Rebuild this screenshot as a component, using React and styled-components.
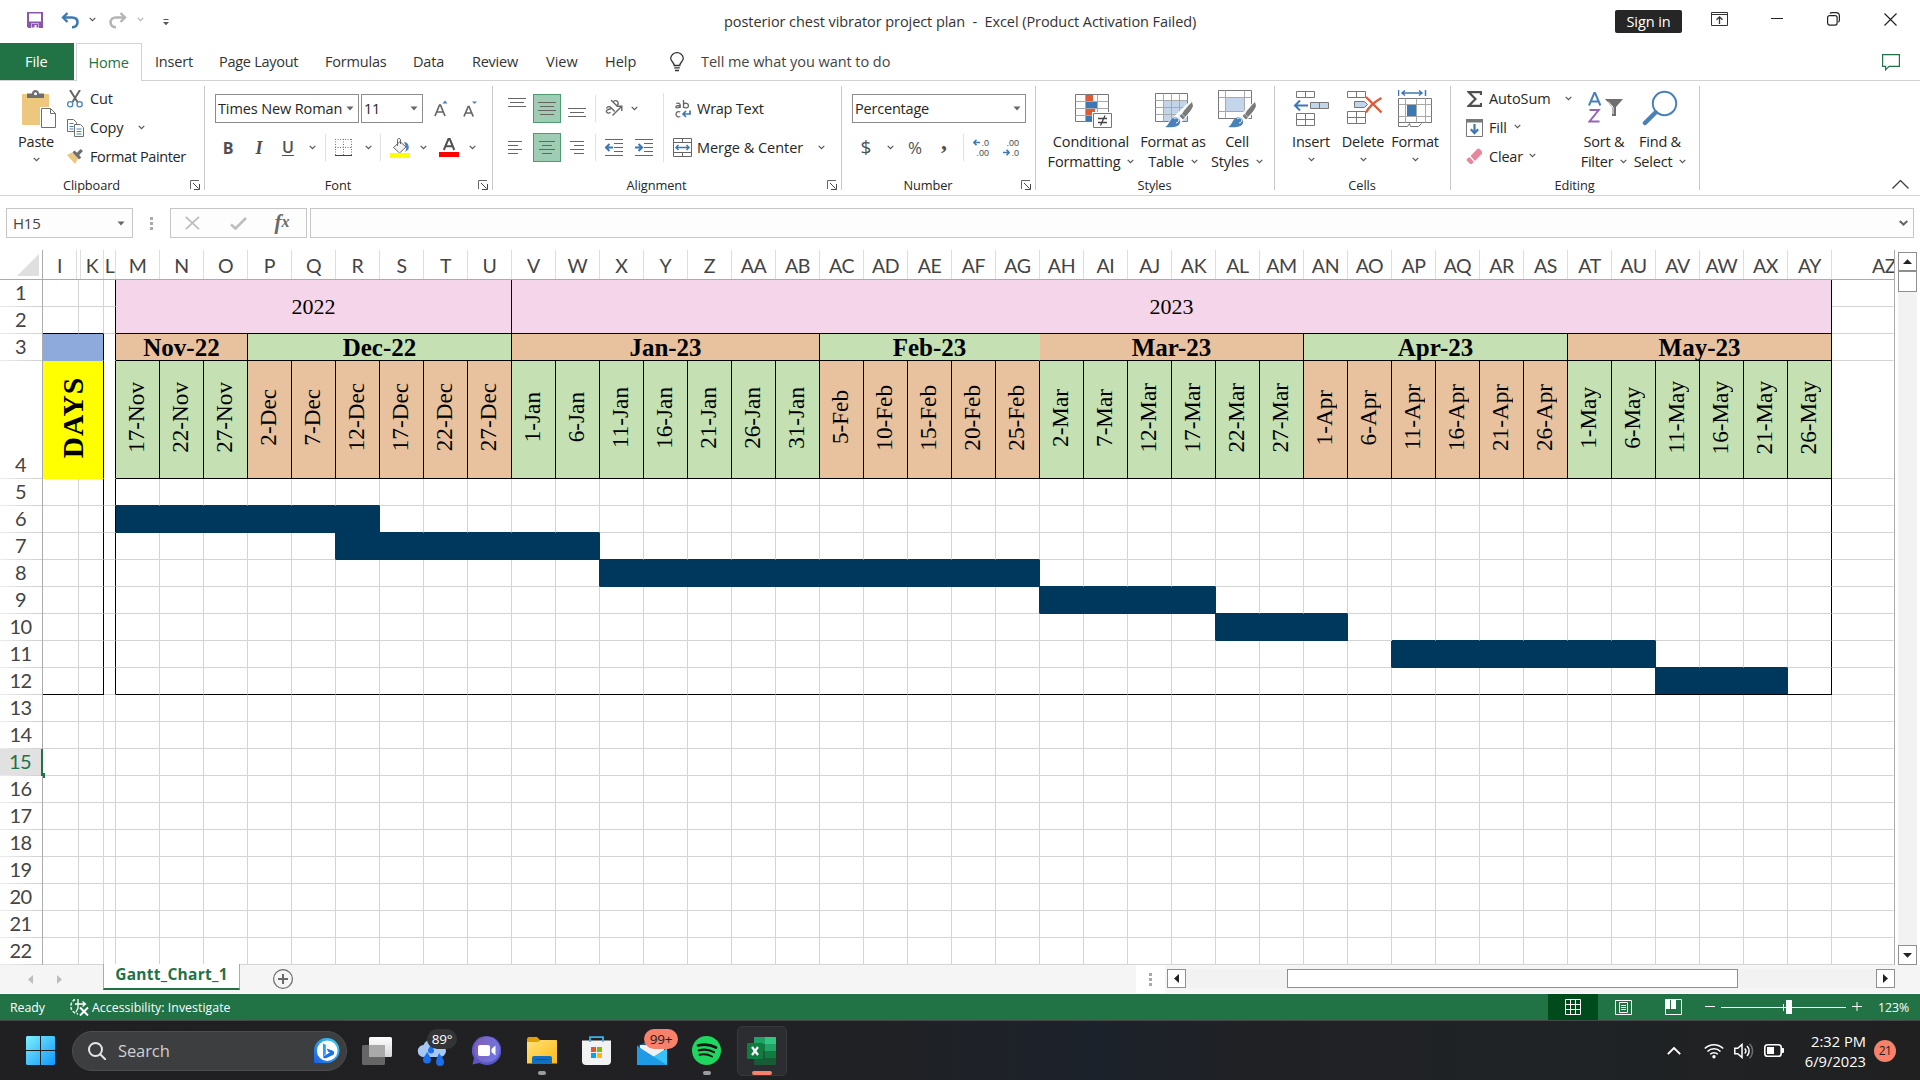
import React from "react";
import styled, { createGlobalStyle } from "styled-components";

const UI = '"Open Sans", "Noto Sans", sans-serif';
const SERIF = '"Liberation Serif", serif';
const GRIDLINE = "#d4d4d4";
const NAVY = "#00375c";
const ORANGE = "#e8c19f";
const GREEN = "#c5e0b3";
const PINK = "#f5d5ea";

const Global = createGlobalStyle`
  * { box-sizing: border-box; }
  html, body { margin: 0; padding: 0; background: #fff; }
  body { width: 1920px; height: 1080px; overflow: hidden; font-family: ${UI}; color: #262626; }
  svg { display: block; flex: none; }
`;

const Window = styled.div`
  width: 1920px;
  height: 1080px;
  display: flex;
  flex-direction: column;
  overflow: hidden;
  font-size: 14.5px;
`;

/* ---------- shared pieces ---------- */

const Slot = styled.div`
  flex: none;
  display: flex;
  align-items: center;
  justify-content: ${(p) => p.$j || "center"};
  width: ${(p) => p.$w}px;
  margin-left: ${(p) => p.$ml || 0}px;
  margin-top: ${(p) => p.$mt || 0}px;
`;

const Text = styled.span`
  flex: none;
  white-space: pre;
  width: ${(p) => (p.$w ? p.$w + "px" : "auto")};
  margin-left: ${(p) => p.$ml || 0}px;
  font-size: ${(p) => p.$fs || 14.5}px;
  letter-spacing: ${(p) => (p.$ls === undefined ? -0.2 : p.$ls)}px;
  color: ${(p) => p.$c || "inherit"};
  line-height: 20px;
`;

const Chevron = ({ c = "#555" }) => (
  <svg width="7" height="5" viewBox="0 0 7 5" fill="none">
    <path d="M.7 .8 3.5 3.6 6.3.8" stroke={c} strokeWidth="1.2" />
  </svg>
);

const Caret = ({ c = "#666" }) => (
  <svg width="8" height="5" viewBox="0 0 8 5">
    <path d="M.5 .5h7L4 4.5z" fill={c} />
  </svg>
);

/* ---------- title bar ---------- */

const TitleBar = styled.header`
  height: 43px;
  flex: none;
  display: flex;
  align-items: flex-start;
`;

const TitleText = styled.div`
  width: 475px;
  margin: 12px 0 0 554px;
  white-space: pre;
  line-height: 20px;
  letter-spacing: -0.07px;
  color: #333;
`;

const SignIn = styled.button`
  width: 67px;
  height: 23px;
  margin: 10px 0 0 416px;
  padding: 0;
  border: 0;
  border-radius: 2px;
  background: #262626;
  color: #fff;
  font: 14.5px/22px ${UI};
  letter-spacing: -0.1px;
`;

/* ---------- tabs ---------- */

const TabStrip = styled.nav`
  height: 38px;
  flex: none;
  display: flex;
  align-items: stretch;
  background: linear-gradient(#d2d2d2, #d2d2d2) left bottom / 100% 1px no-repeat;
`;

const FileTab = styled.div`
  width: 74px;
  height: 37px;
  padding-left: 25px;
  background: #217346;
  color: #fff;
  line-height: 38px;
  letter-spacing: -0.1px;
`;

const ActiveTab = styled.div`
  width: 66px;
  margin-left: 2px;
  padding-right: 1px;
  border: 1px solid #d2d2d2;
  border-bottom: 0;
  background: #fff;
  color: #217346;
  text-align: center;
  line-height: 37px;
  letter-spacing: -0.2px;
`;

const Tab = styled.div`
  width: ${(p) => p.$w}px;
  margin-left: ${(p) => p.$ml}px;
  white-space: nowrap;
  line-height: 38px;
  color: ${(p) => p.$c || "#333"};
  letter-spacing: ${(p) => p.$ls ?? -0.2}px;
`;

/* ---------- ribbon ---------- */

const Ribbon = styled.section`
  height: 115px;
  flex: none;
  display: flex;
  border-bottom: 1px solid #d2d2d2;
`;

const GroupBox = styled.div`
  width: ${(p) => p.$w}px;
  height: 114px;
  flex: none;
  display: flex;
  flex-direction: column;
  background: linear-gradient(#c8c8c8, #c8c8c8) right 5px / 1px 104px no-repeat;
`;

const GroupBody = styled.div`
  height: 94px;
  flex: none;
  display: flex;
`;

const GroupFoot = styled.div`
  height: 20px;
  display: flex;
  align-items: center;
`;

const GroupName = styled.div`
  flex: 1;
  padding-right: 2px;
  text-align: center;
  font-size: 12.8px;
  letter-spacing: -0.1px;
`;

const Launcher = styled.div`
  width: 20px;
  padding-left: 5px;
`;

function Group({ name, w, launcher, children }) {
  return (
    <GroupBox $w={w}>
      <GroupBody>{children}</GroupBody>
      <GroupFoot>
        <GroupName>{name}</GroupName>
        {launcher && (
          <Launcher>
            <svg width="10" height="10" viewBox="0 0 10 10" fill="none" stroke="#666">
              <path d="M.5 9V.5H9" />
              <path d="M3 3l5.5 5.5M9.5 4v5.5H4" stroke="#444" />
            </svg>
          </Launcher>
        )}
      </GroupFoot>
    </GroupBox>
  );
}

const Stack = styled.div`
  width: ${(p) => p.$w}px;
  margin-left: ${(p) => p.$ml || 0}px;
  padding-top: ${(p) => p.$pt || 0}px;
  flex: none;
  display: flex;
  flex-direction: column;
  gap: ${(p) => p.$gap || 0}px;
`;

const Line = styled.div`
  height: 29px;
  flex: none;
  display: flex;
  align-items: center;
`;

const Rule = styled.div`
  width: 1px;
  flex: none;
  height: ${(p) => p.$h || 27}px;
  margin-left: ${(p) => p.$ml || 0}px;
  margin-top: ${(p) => p.$mt || 0}px;
  background: #e1e1e1;
`;

const Combo = styled.div`
  width: ${(p) => p.$w}px;
  height: 29px;
  margin-left: ${(p) => p.$ml || 0}px;
  padding: 0 4px 0 2px;
  flex: none;
  display: flex;
  align-items: center;
  justify-content: space-between;
  border: 1px solid #8c8c8c;
  background: #fff;
`;

const Toggle = styled.div`
  width: 28px;
  height: 29px;
  margin-left: ${(p) => p.$ml}px;
  flex: none;
  display: flex;
  align-items: center;
  justify-content: center;
  border: 1px solid #4f9a70;
  background: #9fcdb3;
`;

const Glyph = styled.span`
  font-family: ${(p) => p.$f || UI};
  font-size: ${(p) => p.$fs}px;
  font-weight: ${(p) => p.$b || 400};
  font-style: ${(p) => (p.$i ? "italic" : "normal")};
  color: ${(p) => p.$c || "#505050"};
  line-height: 1;
  text-decoration: ${(p) => (p.$u ? "underline 1px" : "none")};
  text-underline-offset: 2px;
`;

const BigBtn = styled.div`
  width: ${(p) => p.$w}px;
  margin-left: ${(p) => p.$ml || 0}px;
  flex: none;
  display: flex;
  flex-direction: column;
  align-items: center;
`;

const BigIcon = styled.div`
  height: 50px;
  padding-top: 9px;
  margin-left: ${(p) => p.$ml || 0}px;
`;

const BigLabel = styled.div`
  display: flex;
  align-items: center;
  justify-content: center;
  gap: ${(p) => p.$gap ?? 7}px;
  height: 20px;
  white-space: nowrap;
  letter-spacing: ${(p) => p.$ls ?? -0.22}px;
`;

/* horizontal strokes used by the alignment buttons */
const Bars = ({ w = 18, rows }) => (
  <svg width={w} height={rows.length * 4 - 3} viewBox={`0 0 ${w} ${rows.length * 4 - 3}`}>
    {rows.map(([x, len], i) => (
      <rect key={i} x={x} y={i * 4} width={len} height="1" fill="#666" />
    ))}
  </svg>
);

const Indent = ({ flip }) => (
  <svg width="18" height="17" viewBox="0 0 18 17" fill="none">
    <path d="M0 .5h18M9 4.5h9M9 8.5h9M9 12.5h9M0 16.5h18" stroke="#666" />
    <path d={flip ? "M0 8.5h7M3.5 5l3.6 3.5L3.5 12" : "M8 8.5H1M4.5 5 .9 8.5 4.5 12"} stroke="#3e78b3" strokeWidth="2" />
  </svg>
);

const Brush = () => (
  <g>
    <path d="M37 10c-3 3-8 8-10 12l3 3c4-4 7-8 8-11z" fill="#7a7a7a" />
    <path d="M26.500 22l3.500 3.500-2 2-3.500-3.500z" fill="#7a7a7a" />
    <path d="M10 35c4-1 4-8 9-9.500 4-1 7 2 6 5.500-1 4-8 5-15 4z" fill="#4a80b8" />
    <path d="M19 27c2-2 5-1 5 1 0 2-2 3-3 3" stroke="#fff" fill="none" />
  </g>
);

function ClipboardGroup() {
  return (
    <Group name="Clipboard" w={205} launcher>
      <BigBtn $w={72}>
        <BigIcon $ml={6}>
          <svg width="34" height="38" viewBox="0 0 34 38">
            <rect x="0" y="4" width="27" height="31" rx="1" fill="#eec77e" />
            <path d="M5 8V3.500h5C10 1.500 11.500 0 13.500 0S17 1.500 17 3.500h5V8z" fill="#6e6e6e" />
            <circle cx="13.500" cy="3.800" r="1.500" fill="#fff" />
            <path d="M18 17h11l6 6v15H18z" fill="#fff" />
            <path d="M19.500 18.500h9l5 5v14h-14z" fill="#fff" stroke="#6e6e6e" />
            <path d="M28.500 18.500v5h5" fill="none" stroke="#6e6e6e" />
          </svg>
        </BigIcon>
        <BigLabel>Paste</BigLabel>
        <Slot $w={7} $mt={6}><Chevron /></Slot>
      </BigBtn>
      <Stack $w={130} $ml={-6} $pt={3}>
        <Line>
          <Slot $w={18}>
            <svg width="16" height="18" viewBox="0 0 16 18" fill="none">
              <path d="M3 0l7.500 12M13 0L5.500 12" stroke="#666" strokeWidth="2" />
              <circle cx="3.200" cy="14.300" r="2.600" stroke="#4a80b8" strokeWidth="1.300" />
              <circle cx="12.600" cy="14.300" r="2.600" stroke="#4a80b8" strokeWidth="1.300" />
            </svg>
          </Slot>
          <Text $ml={6}>Cut</Text>
        </Line>
        <Line>
          <Slot $w={18}>
            <svg width="17" height="18" viewBox="0 0 17 18" fill="#fff" stroke="#6e6e6e">
              <path d="M.5.500h6l3 3v9h-9z" />
              <path d="M2.500 4.500h4M2.500 7.500h4M2.500 10h4" stroke="#4a80b8" />
              <path d="M7.500 5.500h6l3 3v9h-9z" />
              <path d="M9.500 10h5M9.500 12.500h5M9.500 15h5" stroke="#4a80b8" />
            </svg>
          </Slot>
          <Text $ml={6} $w={48}>Copy</Text>
          <Chevron />
        </Line>
        <Line>
          <Slot $w={18}>
            <svg width="17" height="15" viewBox="0 0 17 15">
              <path d="M0 6l5-2.500 6 6L8 15z" fill="#eec77e" />
              <path d="M5.500 3.500L7.500 1.500l2.500 2.200 3.500-3.700 2.500 2-3.800 4 2 2.500-2.200 2z" fill="#6e6e6e" />
            </svg>
          </Slot>
          <Text $ml={6} $ls={-0.38}>Format Painter</Text>
        </Line>
      </Stack>
    </Group>
  );
}

function FontGroup() {
  return (
    <Group name="Font" w={288} launcher>
      <Stack $w={270} $ml={10} $pt={13} $gap={10}>
        <Line>
          <Combo $w={144}><Text $ls={-0.12}>Times New Roman</Text><Caret /></Combo>
          <Combo $w={62} $ml={2}><Text>11</Text><Caret /></Combo>
          <Slot $w={16} $ml={10}>
            <svg width="15" height="17" viewBox="0 0 15 17" fill="none">
              <path d="M1 16 5.500 5h1L11 16M2.800 12h6.500" stroke="#666" strokeWidth="1.700" />
              <path d="M8.500 3.500 11 .5l2.500 3z" fill="#4a80b8" />
            </svg>
          </Slot>
          <Slot $w={16} $ml={13}>
            <svg width="15" height="17" viewBox="0 0 15 17" fill="none">
              <path d="M1 16.500 5.200 6.500h.8L10.200 16.500M2.700 13h6" stroke="#666" strokeWidth="1.700" />
              <path d="M9 1.500h5l-2.500 2.500z" fill="#4a80b8" />
            </svg>
          </Slot>
        </Line>
        <Line>
          <Slot $w={26}><Glyph $fs={16} $b={700}>B</Glyph></Slot>
          <Slot $w={36}><Glyph $fs={18} $b={700} $i $f={SERIF}>I</Glyph></Slot>
          <Slot $w={22} $mt={-1}><Glyph $fs={16} $b={600} $u>U</Glyph></Slot>
          <Slot $w={26}><Chevron /></Slot>
          <Rule />
          <Slot $w={35}>
            <svg width="17" height="17" viewBox="0 0 17 17" fill="none" stroke="#777">
              <path d="M.5 0v16M8.500 0v16M16.500 0v16M0 .5h16M0 8.500h16" strokeDasharray="1 1.500" />
              <path d="M0 16.500h17" stroke="#444" />
            </svg>
          </Slot>
          <Slot $w={12} $ml={1}><Chevron /></Slot>
          <Rule $ml={6} />
          <Slot $w={20} $ml={9}>
            <svg width="20" height="20" viewBox="0 0 20 20" fill="none">
              <path d="M3.500 9.500 10 3.500l6 5.500-6.500 6z" stroke="#666" fill="#f3f3f3" />
              <path d="M7.500 8V1.500c0-1.200 3-1.200 3 0V6" stroke="#666" />
              <path d="M14 4c3.500 0 5.500 3 4.500 7.500L15 14c1-2 1.500-4 1-5z" fill="#4a80b8" />
              <path d="M0 15h20v5H0z" fill="#ff0" />
            </svg>
          </Slot>
          <Slot $w={12} $ml={7}><Chevron /></Slot>
          <Slot $w={20} $ml={10}>
            <svg width="20" height="19" viewBox="0 0 20 19" fill="none">
              <path d="M4.800 12 9.500.8h1.200L15.300 12M6.500 8.300h7" stroke="#505050" strokeWidth="2" />
              <path d="M0 14h20v5H0z" fill="#f00" />
            </svg>
          </Slot>
          <Slot $w={12} $ml={7}><Chevron /></Slot>
        </Line>
      </Stack>
    </Group>
  );
}

function AlignmentGroup() {
  return (
    <Group name="Alignment" w={349} launcher>
      <Stack $w={170} $pt={13} $gap={10}>
        <Line>
          <Slot $w={18} $ml={15} $mt={-12}><Bars rows={[[0, 18], [2, 14], [0, 18]]} /></Slot>
          <Toggle $ml={7}><Bars rows={[[0, 18], [2, 14], [0, 18], [2, 14]]} /></Toggle>
          <Slot $w={18} $ml={7} $mt={7}><Bars rows={[[0, 18], [2, 14], [0, 18]]} /></Slot>
          <Rule $ml={9} />
          <Slot $w={18} $ml={9} $mt={-2}>
            <svg width="18" height="18" viewBox="0 0 18 18" fill="none" stroke="#666" strokeWidth="1.400">
              <path d="M7.500 16.500 16.500 7.500M12 7.200h4.800V12" />
              <path d="M1.500 9.500c1-2 3-2.500 4.300-1l4 4M5.500 13.200c-1.500 1.500-3.500 1-4-.3s1-2.800 4.500-3.200" />
              <path d="M6 1l6.500 6.500M8.200 3.200c.6-1.600 3-2.200 4.300-.7s.6 3.700-.9 4.300" />
            </svg>
          </Slot>
          <Slot $w={12} $ml={5}><Chevron /></Slot>
        </Line>
        <Line>
          <Slot $w={18} $ml={13}><Bars w={14} rows={[[0, 14], [0, 10], [0, 14], [0, 10]]} /></Slot>
          <Toggle $ml={9}><Bars w={16} rows={[[0, 16], [3, 10], [0, 16], [3, 10]]} /></Toggle>
          <Slot $w={18} $ml={7}><Bars w={14} rows={[[0, 14], [4, 10], [0, 14], [4, 10]]} /></Slot>
          <Rule $ml={9} />
          <Slot $w={18} $ml={9}><Indent /></Slot>
          <Slot $w={18} $ml={12}><Indent flip /></Slot>
        </Line>
      </Stack>
      <Rule $h={69} $mt={12} />
      <Stack $w={170} $pt={13} $gap={10}>
        <Line>
          <Slot $w={20} $ml={9}>
            <svg width="16" height="18" viewBox="0 0 16 18" fill="none">
              <path d="M1.200 3.500c2-.8 4 0 4 1.500V8M5 5.500C2 5.500.8 6 .8 7s3 1.500 4.400-.5" stroke="#666" strokeWidth="1.300" />
              <path d="M8.500 0v8M8.500 4c2-1.500 5-.5 5 1.700S10.500 8.700 8.500 7" stroke="#666" strokeWidth="1.300" />
              <path d="M5.300 12c-2-1-4.300-.2-4.300 2.200s2.300 3.300 4.300 2.300" stroke="#666" strokeWidth="1.300" />
              <path d="M15 10.500v3.500H9M11 11l-3 3 3 3" stroke="#3e78b3" strokeWidth="1.700" />
            </svg>
          </Slot>
          <Text $ml={4} $ls={-0.25}>Wrap Text</Text>
        </Line>
        <Line>
          <Slot $w={20} $ml={8}>
            <svg width="19" height="19" viewBox="0 0 19 19" fill="none">
              <path d="M.5.500h18v18H.5zM.5 4.500h18M.5 14.500h18M9.500.500v4M9.500 14.500v4" stroke="#666" />
              <path d="M3 9.500h13M5.500 7 3 9.500 5.500 12M13.500 7 16 9.500 13.500 12" stroke="#3e78b3" strokeWidth="1.500" />
            </svg>
          </Slot>
          <Text $ml={5} $w={118} $ls={-0.03}>Merge &amp; Center</Text>
          <Slot $w={12}><Chevron /></Slot>
        </Line>
      </Stack>
    </Group>
  );
}

const DecText = styled.div`
  width: 16px;
  height: 20px;
  color: #505050;
  font: 9px/10px "Liberation Sans", sans-serif;
  white-space: nowrap;
  display: flex;
  flex-direction: column;
`;

const DecRow = styled.div`
  height: 10px;
  display: flex;
  align-items: center;
  justify-content: flex-end;
  gap: 1px;
`;

const TinyArrow = ({ flip }) => (
  <svg width="7" height="7" viewBox="0 0 7 7" fill="none" stroke="#3e78b3" strokeWidth="1.600">
    <path d={flip ? "M0 3.500h6M3.500 .8 6.200 3.500 3.500 6.200" : "M7 3.500H1M3.500 .8.8 3.500l2.700 2.700"} />
  </svg>
);

function NumberGroup() {
  return (
    <Group name="Number" w={194} launcher>
      <Stack $w={174} $ml={10} $pt={13} $gap={10}>
        <Line><Combo $w={174}><Text $ls={-0.2}>Percentage</Text><Caret /></Combo></Line>
        <Line>
          <Slot $w={28}><Glyph $fs={19}>$</Glyph></Slot>
          <Slot $w={12} $ml={4}><Chevron /></Slot>
          <Slot $w={20} $ml={9}><Glyph $fs={17}>%</Glyph></Slot>
          <Slot $w={10} $ml={14} $mt={-14}><Glyph $fs={24} $b={700} $f={SERIF}>,</Glyph></Slot>
          <Rule $ml={14} />
          <Slot $w={16} $ml={9}>
            <DecText><DecRow><TinyArrow />.0</DecRow><DecRow>.00</DecRow></DecText>
          </Slot>
          <Slot $w={16} $ml={14}>
            <DecText><DecRow>.00</DecRow><DecRow><TinyArrow flip />.0</DecRow></DecText>
          </Slot>
        </Line>
      </Stack>
    </Group>
  );
}

function StylesGroup() {
  return (
    <Group name="Styles" w={239}>
      <BigBtn $w={96} $ml={7}>
        <BigIcon $ml={4}>
          <svg width="37" height="38" viewBox="0 0 37 38" fill="none">
            <path d="M.5 4.500h33v27H.5z" fill="#fff" stroke="#777" />
            <path d="M.5 11.500h33M.5 18.500h33M.5 25.500h33M10.500 4.500v27M22.500 4.500v27" stroke="#a8a8a8" />
            <path d="M11 5h7v6h-7zM11 19h9v6h-9z" fill="#dd5b37" />
            <path d="M11 12h11v6H11zM11 26h6v5h-6z" fill="#3e78b3" />
            <path d="M17 22h20v16H17z" fill="#fff" />
            <path d="M18.500 23.500h18v14h-18z" fill="#fff" stroke="#777" />
            <path d="M23 28.500h9M23 32.500h9M30 25.500 25.500 35.500" stroke="#444" strokeWidth="1.300" />
          </svg>
        </BigIcon>
        <BigLabel $ls={-0.1}>Conditional</BigLabel>
        <BigLabel $ls={-0.15}>Formatting <Chevron /></BigLabel>
      </BigBtn>
      <BigBtn $w={68}>
        <BigIcon $ml={2}>
          <svg width="38" height="38" viewBox="0 0 38 38" fill="none">
            <path d="M.5 3.500h32v28H.5z" fill="#fff" stroke="#777" />
            <path d="M9 11h23v20H9z" fill="#c2d5ea" />
            <path d="M.5 10.500h32M.5 17.500h32M.5 24.500h32M8.500 3.500v28M16.500 3.500v28M24.500 3.500v28" stroke="#a8a8a8" />
            <path d="M38 8 9 36h14l15-16z" fill="#fff" opacity=".9" />
            <g transform="translate(0 2)"><Brush /></g>
          </svg>
        </BigIcon>
        <BigLabel>Format as</BigLabel>
        <BigLabel>Table <Chevron /></BigLabel>
      </BigBtn>
      <BigBtn $w={60}>
        <BigIcon>
          <svg width="38" height="38" viewBox="0 0 38 38" fill="none">
            <path d="M.5.500h33v28H.5z" fill="#fff" stroke="#777" />
            <path d="M.5 7.500h33M.5 21.500h33M7.500.500v28M26.500.500v28" stroke="#a8a8a8" />
            <path d="M8 8h18v13H8z" fill="#c2d5ea" />
            <path d="M38 10 10 36h14l14-16z" fill="#fff" opacity=".9" />
            <g transform="translate(0 2)"><Brush /></g>
          </svg>
        </BigIcon>
        <BigLabel>Cell</BigLabel>
        <BigLabel>Styles <Chevron /></BigLabel>
      </BigBtn>
    </Group>
  );
}

function CellsGroup() {
  return (
    <Group name="Cells" w={176}>
      <BigBtn $w={52} $ml={10}>
        <BigIcon>
          <svg width="36" height="37" viewBox="0 0 36 37" fill="none" stroke="#777">
            <path d="M3.500 1.500h18v6h-18zM12.500 1.500v6M3.500 23.500h18v12h-18zM12.500 23.500v12M3.500 29.500h18" />
            <path d="M17.500 12.500h18v6h-18z" fill="#c2d5ea" /><path d="M26.500 12.500v6" />
            <path d="M15 15.500H2M7 10.500 2 15.500l5 5" stroke="#3e78b3" strokeWidth="2" />
          </svg>
        </BigIcon>
        <BigLabel>Insert</BigLabel>
        <Slot $w={7} $mt={6}><Chevron /></Slot>
      </BigBtn>
      <BigBtn $w={52}>
        <BigIcon $ml={3}>
          <svg width="36" height="37" viewBox="0 0 36 37" fill="none" stroke="#777">
            <path d="M.5 1.500h18v6H.5zM9.500 1.500v6M.5 21.500h18v12H.5zM9.500 21.500v12M.5 27.500h18" />
            <path d="M7.500 11.500h10l3 3-3 3h-10z" fill="#c2d5ea" />
            <path d="M19 7 34.500 22.500M34.500 8C29 11 22 17 19 22.500" stroke="#dd5b37" strokeWidth="2.400" />
          </svg>
        </BigIcon>
        <BigLabel>Delete</BigLabel>
        <Slot $w={7} $mt={6}><Chevron /></Slot>
      </BigBtn>
      <BigBtn $w={52}>
        <BigIcon>
          <svg width="35" height="38" viewBox="0 0 35 38" fill="none">
            <path d="M.5 0v6M27.500 0v6M4 3h20M7 .5 4 3l3 2.500M21 .5 24 3l-3 2.500" stroke="#3e78b3" strokeWidth="1.500" />
            <path d="M.5 8.500h33v24H.5z" fill="#fff" stroke="#777" />
            <path d="M.5 14.500h33M.5 26.500h33M7.500 8.500v24M18.500 8.500v24M27.500 8.500v24" stroke="#a8a8a8" />
            <path d="M9 15h9v11H9z" fill="#3e78b3" />
            <path d="M.5 32.500v4h9l2-3 1 3h8l3-3" stroke="#777" />
          </svg>
        </BigIcon>
        <BigLabel>Format</BigLabel>
        <Slot $w={7} $mt={6}><Chevron /></Slot>
      </BigBtn>
    </Group>
  );
}

function EditingGroup() {
  return (
    <Group name="Editing" w={249}>
      <Stack $w={124} $ml={15} $pt={3}>
        <Line>
          <Slot $w={17}>
            <svg width="15" height="16" viewBox="0 0 15 16" fill="none">
              <path d="M14 4V1.200H1.800L8.500 8 1.800 14.800H14V12" stroke="#505050" strokeWidth="2.200" />
            </svg>
          </Slot>
          <Text $ml={6} $w={73} $ls={-0.1}>AutoSum</Text>
          <Slot $w={12}><Chevron /></Slot>
        </Line>
        <Line>
          <Slot $w={17}>
            <svg width="17" height="18" viewBox="0 0 17 18" fill="none">
              <path d="M.5.500h16v17H.5z" fill="#fff" stroke="#777" />
              <path d="M0 0h17v3.500H0z" fill="#777" />
              <path d="M8.500 5v9M4.800 10.300l3.700 3.900 3.700-3.900" stroke="#3e78b3" strokeWidth="2.200" />
            </svg>
          </Slot>
          <Text $ml={6} $w={22}>Fill</Text>
          <Slot $w={12} $mt={-2}><Chevron /></Slot>
        </Line>
        <Line>
          <Slot $w={17}>
            <svg width="17" height="17" viewBox="0 0 17 17">
              <path d="M4.500 8 11.500.8h2L16 3.500v2L9 13z" fill="#e8869a" />
              <path d="M3.500 9 8 14l-2.500 2H4L.8 12.500V11z" fill="#e8869a" />
            </svg>
          </Slot>
          <Text $ml={6} $w={37}>Clear</Text>
          <Slot $w={12} $mt={-2}><Chevron /></Slot>
        </Line>
      </Stack>
      <BigBtn $w={56} $ml={-14}>
        <BigIcon $ml={4}>
          <svg width="36" height="35" viewBox="0 0 36 35" fill="none">
            <path d="M1 15.500 6.300 3h.8l5.300 12.500M3.200 11.500h7" stroke="#4a80b8" strokeWidth="2" />
            <path d="M1.500 20h9.200L1.500 31.500h10" stroke="#9564b5" strokeWidth="2" />
            <path d="M17 9h18l-7 8v9h-4v-9z" fill="#6e6e6e" />
            <path d="M20 11.500l5 5.500v7" stroke="#fff" />
          </svg>
        </BigIcon>
        <BigLabel>Sort &amp;</BigLabel>
        <BigLabel>Filter <Chevron /></BigLabel>
      </BigBtn>
      <BigBtn $w={56}>
        <BigIcon>
          <svg width="36" height="36" viewBox="0 0 36 36" fill="none" stroke="#4a80b8">
            <circle cx="22.500" cy="13.500" r="11.700" strokeWidth="2" />
            <path d="M13.500 22.500 3 33" strokeWidth="4.500" strokeLinecap="round" />
          </svg>
        </BigIcon>
        <BigLabel>Find &amp;</BigLabel>
        <BigLabel>Select <Chevron /></BigLabel>
      </BigBtn>
    </Group>
  );
}

const CollapseSlot = styled.div`
  flex: 1;
  display: flex;
  justify-content: flex-end;
  align-items: flex-end;
  padding: 0 11px 6px 0;
`;

/* ---------- formula bar ---------- */

const FormulaBar = styled.div`
  height: 54px;
  flex: none;
  display: flex;
  padding: 12px 0 0 6px;
`;

const Field = styled.div`
  width: ${(p) => p.$w}px;
  height: 30px;
  margin-left: ${(p) => p.$ml || 0}px;
  padding: ${(p) => p.$p || "0 7px 0 6px"};
  flex: none;
  display: flex;
  align-items: center;
  justify-content: ${(p) => p.$j || "space-between"};
  border: 1px solid #c6c6c6;
  background: #fdfdfd;
  color: #444;
`;

const Dots = styled.div`
  width: 3px;
  margin-left: ${(p) => p.$ml}px;
  height: ${(p) => p.$h}px;
  flex: none;
  display: flex;
  flex-direction: column;
  justify-content: center;
  gap: 2px;
  &::before { content: ""; height: 3px; background: #aaa; }
  &::after { content: ""; height: 3px; background: #aaa; }
`;

const Dot = styled.i`
  height: 3px;
  background: #aaa;
`;

/* ---------- worksheet ---------- */

const SheetArea = styled.main`
  height: 715px;
  flex: none;
  display: flex;
  overflow: hidden;
`;

const Sheet = styled.div`
  width: 1895px;
  flex: none;
  border-right: 1px solid #ababab;
  border-bottom: 1px solid #ababab;
`;

const HeadRow = styled.div`
  height: 30px;
  display: flex;
  overflow: hidden;
  border-bottom: 1px solid #ababab;
  background: #fff;
`;

const HeadCell = styled.div`
  width: ${(p) => p.$w || 44}px;
  flex: none;
  padding-left: ${(p) => p.$pl || 0}px;
  border-right: 1px solid ${(p) => p.$bc || "#dedede"};
  text-align: ${(p) => (p.$pl ? "left" : "center")};
  font: 19.5px/31px Lato, sans-serif;
  letter-spacing: -0.4px;
  color: #444;
`;

const Corner = styled.div`
  width: 43px;
  flex: none;
  border-right: 1px solid #ababab;
  padding: 4px 0 0 17px;
`;

const GridRow = styled.div`
  height: ${(p) => p.$h || 27}px;
  display: flex;
`;

const TopRows = styled.div`
  display: grid;
  grid-template-columns: 43px 36px 25px 12px 396px 1320px 62px;
  grid-template-rows: 27px 27px;
`;

const RowHead = styled.div`
  position: relative;
  width: 43px;
  flex: none;
  display: flex;
  align-items: flex-end;
  justify-content: center;
  padding: 0 1px 1px 0;
  border-right: ${(p) => (p.$on ? "2px solid #217346" : "1px solid #ababab")};
  background: linear-gradient(90deg, #ececec, #cfcfcf) left bottom / 100% 1px no-repeat ${(p) => (p.$on ? "#e1e1e1" : "#fff")};
  font: 20px/27px Lato, sans-serif;
  letter-spacing: -0.5px;
  color: ${(p) => (p.$on ? "#217346" : "#444")};
`;

/* fill handle of the selected cell, peeking out of the hidden column */
const Handle = styled.span`
  position: absolute;
  right: -4px;
  bottom: -2px;
  width: 4px;
  height: 5px;
  background: #217346;
`;

const Cell = styled.div`
  width: ${(p) => p.$w || 44}px;
  flex: none;
  background: ${(p) => p.$bg || "#fff"};
  border-right: 1px solid ${(p) => p.$r || GRIDLINE};
  border-bottom: 1px solid ${(p) => p.$b || GRIDLINE};
`;

const YearCell = styled(Cell)`
  width: auto;
  grid-row: span 2;
  display: flex;
  align-items: center;
  justify-content: center;
  font: 22px ${SERIF};
  color: #000;
`;

const MonthCell = styled(Cell)`
  overflow: hidden;
  text-align: center;
  font: bold 25px/28px ${SERIF};
  color: #000;
`;

const DateCell = styled(Cell)`
  display: flex;
  align-items: center;
  justify-content: center;
  padding: 0 4px 4px 0;
  color: #000;
`;

const DaysCell = styled(DateCell)`
  padding: 0 1px 4px 0;
`;

const Turned = styled.span`
  writing-mode: vertical-rl;
  transform: rotate(180deg);
  white-space: nowrap;
  font: ${(p) => (p.$bold ? "bold 29.5px/30px" : "23.2px/28px")} ${SERIF};
  letter-spacing: ${(p) => (p.$bold ? 0.9 : 0)}px;
`;

const COLS = "M N O P Q R S T U V W X Y Z AA AB AC AD AE AF AG AH AI AJ AK AL AM AN AO AP AQ AR AS AT AU AV AW AX AY".split(" ");

const MONTHS = [
  { name: "Nov-22", top: ORANGE, low: GREEN, days: ["17-Nov", "22-Nov", "27-Nov"] },
  { name: "Dec-22", top: GREEN, low: ORANGE, days: ["2-Dec", "7-Dec", "12-Dec", "17-Dec", "22-Dec", "27-Dec"] },
  { name: "Jan-23", top: ORANGE, low: GREEN, days: ["1-Jan", "6-Jan", "11-Jan", "16-Jan", "21-Jan", "26-Jan", "31-Jan"] },
  { name: "Feb-23", top: GREEN, low: ORANGE, open: true, days: ["5-Feb", "10-Feb", "15-Feb", "20-Feb", "25-Feb"] },
  { name: "Mar-23", top: ORANGE, low: GREEN, days: ["2-Mar", "7-Mar", "12-Mar", "17-Mar", "22-Mar", "27-Mar"] },
  { name: "Apr-23", top: GREEN, low: ORANGE, days: ["1-Apr", "6-Apr", "11-Apr", "16-Apr", "21-Apr", "26-Apr"] },
  { name: "May-23", top: ORANGE, low: GREEN, days: ["1-May", "6-May", "11-May", "16-May", "21-May", "26-May"] },
];

/* first and last date column (inclusive) of each task's bar, by sheet row */
const BARS = { 6: [0, 5], 7: [5, 10], 8: [11, 20], 9: [21, 24], 10: [25, 27], 11: [29, 34], 12: [35, 37] };

const filled = (row, col) => !!BARS[row] && col >= BARS[row][0] && col <= BARS[row][1];

function DataRow({ n }) {
  const inChart = n <= 12;
  const bottom = n === 12 ? "#000" : GRIDLINE;
  return (
    <GridRow>
      <RowHead $on={n === 15}>{n}{n === 15 && <Handle />}</RowHead>
      <Cell $w={36} $b={bottom} />
      <Cell $w={25} $r={inChart ? "#000" : undefined} $b={bottom} />
      <Cell $w={12} $r={inChart ? "#000" : undefined} />
      {COLS.map((c, i) => {
        const on = filled(n, i);
        const r = on || filled(n, i + 1) ? NAVY : i === 38 && inChart ? "#000" : undefined;
        const b = n === 12 ? "#000" : on || filled(n + 1, i) ? NAVY : undefined;
        return <Cell key={c} $bg={on ? NAVY : undefined} $r={r} $b={b} />;
      })}
      <Cell $w={62} $r="#fff" />
    </GridRow>
  );
}

function Worksheet() {
  return (
    <Sheet>
      <HeadRow>
        <Corner>
          <svg width="22" height="22" viewBox="0 0 22 22"><path d="M22 0v22H0z" fill="#dfdfdf" /></svg>
        </Corner>
        <HeadCell $w={34}>I</HeadCell>
        <HeadCell $w={4} />
        <HeadCell $w={23}>K</HeadCell>
        <HeadCell $w={12}>L</HeadCell>
        {COLS.map((c) => <HeadCell key={c}>{c}</HeadCell>)}
        <HeadCell $w={62} $pl={40} $bc="#fff">AZ</HeadCell>
      </HeadRow>
      <TopRows>
        <RowHead>1</RowHead>
        <Cell $w={36} /><Cell $w={25} /><Cell $w={12} $r="#000" />
        <YearCell $bg={PINK} $r="#000" $b="#000">2022</YearCell>
        <YearCell $bg={PINK} $r="#000" $b="#000">2023</YearCell>
        <Cell $w={62} $r="#fff" />
        <RowHead>2</RowHead>
        <Cell $w={36} $b="#000" /><Cell $w={25} $b="#000" /><Cell $w={12} $r="#000" />
        <Cell $w={62} $r="#fff" />
      </TopRows>
      <GridRow>
        <RowHead>3</RowHead>
        <Cell $w={61} $bg="#8ea9db" $r="#000" $b="#8ea9db" />
        <Cell $w={12} $r="#000" $b="#fff" />
        {MONTHS.map((m) => (
          <MonthCell key={m.name} $w={m.days.length * 44} $bg={m.top} $r={m.open ? m.top : "#000"} $b="#000">{m.name}</MonthCell>
        ))}
        <Cell $w={62} $r="#fff" />
      </GridRow>
      <GridRow $h={118}>
        <RowHead>4</RowHead>
        <DaysCell $w={61} $bg="#ff0" $r="#000" $b="#ff0"><Turned $bold>DAYS</Turned></DaysCell>
        <Cell $w={12} $r="#000" $b="#fff" />
        {MONTHS.flatMap((m) =>
          m.days.map((d) => (
            <DateCell key={d} $bg={m.low} $r="#000" $b="#000"><Turned>{d}</Turned></DateCell>
          ))
        )}
        <Cell $w={62} $r="#fff" />
      </GridRow>
      {Array.from({ length: 18 }, (_, i) => <DataRow key={i} n={i + 5} />)}
    </Sheet>
  );
}

const ScrollColumn = styled.div`
  width: 19px;
  height: 713px;
  margin: 2px 0 0 3px;
  flex: none;
  display: flex;
  flex-direction: column;
  background: #f2f2f2;
`;

const ScrollPart = styled.div`
  width: ${(p) => p.$w || 19}px;
  height: ${(p) => p.$h || 19}px;
  margin-top: ${(p) => p.$mt || 0};
  margin-left: ${(p) => p.$ml || 0};
  flex: none;
  display: flex;
  align-items: center;
  justify-content: center;
  border: 1px solid #8f8f8f;
  background: #fff;
`;

/* ---------- sheet tabs ---------- */

const TabBar = styled.div`
  height: 29px;
  flex: none;
  display: flex;
  background: #f5f5f5;
  border-bottom: 1px solid #fff;
`;

const SheetTab = styled.div`
  width: 137px;
  height: 26px;
  margin: -1px 0 0 38px;
  background: #fff;
  border: 1px solid #ababab;
  border-top: 0;
  border-bottom: 2px solid #217346;
  color: #217346;
  font-size: 15.5px;
  font-weight: 700;
  line-height: 21px;
  letter-spacing: 0.28px;
  text-align: center;
`;

const Splitter = styled.div`
  width: 29px;
  height: 28px;
  margin-left: 843px;
  flex: none;
  background: #fff;
`;

const HScroll = styled.div`
  width: 728px;
  height: 19px;
  margin: 4px 0 0 2px;
  flex: none;
  display: flex;
  background: #f2f2f2;
`;

/* ---------- status bar ---------- */

const StatusBar = styled.footer`
  height: 27px;
  flex: none;
  display: flex;
  align-items: center;
  background: #217346;
  border-bottom: 1px solid #46484a;
  color: #fff;
`;

const StatusText = styled.div`
  width: ${(p) => p.$w}px;
  margin-left: ${(p) => p.$ml}px;
  padding-top: 1px;
  flex: none;
  white-space: nowrap;
  font-size: 12.3px;
  line-height: 20px;
  letter-spacing: ${(p) => p.$ls ?? 0}px;
`;

const ViewBtn = styled.div`
  width: 50px;
  height: 26px;
  flex: none;
  display: flex;
  align-items: center;
  justify-content: center;
  background: ${(p) => (p.$on ? "#004b1c" : "transparent")};
`;

/* ---------- taskbar ---------- */

const Taskbar = styled.div`
  height: 59px;
  flex: none;
  display: flex;
  align-items: center;
  background: linear-gradient(90deg, #202022 0, #202124 45%, #1c222b 57%, #202124 66%, #1f2325 80%, #202021 100%);
  color: #fff;
`;

const SearchPill = styled.div`
  width: 275px;
  height: 40px;
  margin-left: 17px;
  padding: 0 7px 0 15px;
  flex: none;
  display: flex;
  align-items: center;
  border: 1px solid #4c4d4f;
  border-radius: 20px;
  background: #3d3e40;
  color: #cfcfcf;
`;

const AppSlot = styled.div`
  position: relative;
  width: 55px;
  height: 59px;
  flex: none;
  display: flex;
  align-items: center;
  justify-content: center;
`;

const ActiveTile = styled.div`
  width: 50px;
  height: 50px;
  display: flex;
  align-items: center;
  justify-content: center;
  border: 1px solid #37393c;
  border-radius: 5px;
  background: #2c2d31;
`;

const Badge = styled.span`
  position: absolute;
  left: ${(p) => p.$l}px;
  top: 8px;
  width: ${(p) => p.$w}px;
  height: 20px;
  border-radius: 10px;
  background: ${(p) => p.$bg};
  color: ${(p) => p.$c};
  font-size: 13.5px;
  line-height: 20px;
  text-align: center;
  letter-spacing: -0.3px;
`;

const Running = styled.span`
  position: absolute;
  left: 50%;
  bottom: 5px;
  width: ${(p) => p.$w}px;
  height: 4px;
  margin-left: ${(p) => -p.$w / 2}px;
  border-radius: 2px;
  background: ${(p) => p.$c};
`;

const Clock = styled.div`
  width: 90px;
  margin-left: -8px;
  flex: none;
  text-align: right;
  font-size: 14.7px;
  line-height: 20px;
  letter-spacing: 0;
`;

const CountBadge = styled.div`
  width: 22px;
  height: 22px;
  margin-left: 8px;
  flex: none;
  border-radius: 50%;
  background: #f7816a;
  color: #1d1d1d;
  font-size: 12px;
  line-height: 22px;
  text-align: center;
  letter-spacing: -0.5px;
`;

function TaskIcons() {
  return (
    <>
      <AppSlot>
        <svg width="30" height="28" viewBox="0 0 30 28">
          <defs>
            <linearGradient id="tv" x1="0" y1="0" x2="0" y2="1"><stop stopColor="#fff" /><stop offset="1" stopColor="#d5d5d5" /></linearGradient>
          </defs>
          <rect x="7" y="0" width="23" height="20" rx="1.500" fill="url(#tv)" />
          <rect x="0" y="8" width="23" height="20" rx="1.500" fill="#666" />
          <path d="M7 8h16v12H7z" fill="#a9a9a9" />
        </svg>
      </AppSlot>
      <AppSlot>
        <Slot $w={30} $mt={4}>
          <svg width="30" height="26" viewBox="0 0 30 26">
            <path d="M7 17a6 6 0 0 1-.5-12A9 9 0 0 1 23 5a6 6 0 0 1 0 12z" fill="#a8c8f4" />
            <path d="M14 5c1.500 2 3 4 3 5.500a3 3 0 0 1-6 0C11 9 12.500 7 14 5zM10 12c2 2.500 4 6 4 8a4 4 0 0 1-8-1c.5-2.500 3-4 4-7zM22 13c2 3 5 6 5 9a4 4 0 0 1-8 0c0-3 2-6 3-9z" fill="#1a6ff0" />
          </svg>
        </Slot>
        <Badge $l={23} $w={30} $bg="#333436" $c="#fff">89°</Badge>
      </AppSlot>
      <AppSlot>
        <svg width="29" height="29" viewBox="0 0 29 29">
          <defs>
            <linearGradient id="ch" x1="0" y1="0" x2="1" y2=".4"><stop stopColor="#8f5fa8" /><stop offset="1" stopColor="#7b83eb" /></linearGradient>
          </defs>
          <path d="M14.500 0a14.500 14.500 0 1 1-7 27L.5 28.500 2 22A14.500 14.500 0 0 1 14.500 0z" fill="#5b57c7" />
          <circle cx="14.800" cy="13.500" r="12.800" fill="url(#ch)" opacity=".7" />
          <rect x="6" y="9" width="12" height="11" rx="2" fill="#fff" />
          <path d="M19.500 13l4-3.500v10l-4-3.500z" fill="#fff" />
        </svg>
      </AppSlot>
      <AppSlot>
        <svg width="30" height="27" viewBox="0 0 30 27">
          <defs>
            <linearGradient id="fo" x1="0" y1="0" x2="1" y2="1"><stop stopColor="#ffe07a" /><stop offset="1" stopColor="#fdbc12" /></linearGradient>
          </defs>
          <path d="M0 2.500C0 1 .8 0 2 0h8l3 3v5H0z" fill="#e0a106" />
          <path d="M0 5h11l2.500-2H29c.6 0 1 .4 1 1v22.500H0z" fill="url(#fo)" />
          <path d="M5 27v-6c0-1.200.8-2 2-2h16c1.200 0 2 .8 2 2v6z" fill="#0f6fc0" />
          <path d="M8.500 22.500h13" stroke="#0a4d8c" />
        </svg>
        <Running $w={8} $c="#9b9c9e" />
      </AppSlot>
      <AppSlot>
        <svg width="29" height="29" viewBox="0 0 29 29">
          <path d="M0 4.500h29V25c0 2.500-1.500 4-4 4H4c-2.500 0-4-1.500-4-4z" fill="#f2f2f2" />
          <path d="M8 6V1.200h13V6" fill="none" stroke="#35b5ee" strokeWidth="1.800" />
          <path d="M9 11h5v5H9z" fill="#f25022" />
          <path d="M15 11h5v5h-5z" fill="#7fba00" />
          <path d="M9 17h5v5H9z" fill="#00a4ef" />
          <path d="M15 17h5v5h-5z" fill="#ffb900" />
        </svg>
      </AppSlot>
      <AppSlot>
        <Slot $w={30} $mt={4}>
          <svg width="30" height="25" viewBox="0 0 30 25">
            <path d="M0 6 14 0l16 6-15 8z" fill="#0c5fae" />
            <path d="M3 5h24v6l-12 7L3 10z" fill="#f0f0f0" />
            <path d="M0 6l16 11 14-9v17H0z" fill="#39c3f4" />
            <path d="M0 6l30 19H0z" fill="#1f9be6" />
          </svg>
        </Slot>
        <Badge $l={20} $w={34} $bg="#f7816a" $c="#1d1d1d">99+</Badge>
      </AppSlot>
      <AppSlot>
        <svg width="29" height="29" viewBox="0 0 29 29" fill="none" stroke="#191414" strokeLinecap="round">
          <circle cx="14.500" cy="14.500" r="14.500" fill="#1ed760" stroke="none" />
          <path d="M6 9.500c6-1.700 12.500-1 18 2" strokeWidth="2.700" />
          <path d="M6.800 14.300c5.200-1.400 10.500-.8 15.200 1.800" strokeWidth="2.200" />
          <path d="M7.500 18.800c4.300-1 8.500-.5 12.500 1.700" strokeWidth="1.900" />
        </svg>
        <Running $w={8} $c="#9b9c9e" />
      </AppSlot>
      <AppSlot>
        <ActiveTile>
          <svg width="29" height="28" viewBox="0 0 29 28">
            <path d="M7 0h11v7H7z" fill="#21a366" />
            <path d="M18 0h10c.6 0 1 .4 1 1v6H18z" fill="#33c481" />
            <path d="M7 7h11v7H7z" fill="#107c41" />
            <path d="M18 7h11v7H18z" fill="#21a366" />
            <path d="M7 14h11v7H7z" fill="#185c37" />
            <path d="M18 14h11v7H18z" fill="#107c41" />
            <path d="M7 21h22v6c0 .6-.4 1-1 1H8c-.6 0-1-.4-1-1z" fill="#185c37" />
            <rect x="0" y="6" width="16" height="16" rx="1" fill="#107c41" />
            <path d="M5 10l6 8M11 10l-6 8" stroke="#fff" strokeWidth="2.200" />
          </svg>
        </ActiveTile>
        <Running $w={20} $c="#f7816a" />
      </AppSlot>
    </>
  );
}

export default function App() {
  return (
    <Window>
      <Global />
      <TitleBar>
        <Slot $w={16} $ml={27} $mt={12}>
          <svg width="16" height="16" viewBox="0 0 16 16">
            <path d="M0 0h16v16H1.500L0 14.500z" fill="#8a56ac" />
            <path d="M2 1.500h12v8H2zM4 11.500h8V16H4z" fill="#fff" />
            <path d="M4.500 12h7v3.500h-2V13h-2v2.500h-3z" fill="#8a56ac" />
          </svg>
        </Slot>
        <Slot $w={18} $ml={18} $mt={12}>
          <svg width="18" height="17" viewBox="0 0 18 17" fill="none" stroke="#3e78b3">
            <path d="M2 5.500h9c3.500 0 5.500 2 5.500 4.800 0 3-2.500 5-5.500 5" strokeWidth="2.600" />
            <path d="M6.500 1 2 5.500 6.500 10" strokeWidth="2.400" />
          </svg>
        </Slot>
        <Slot $w={8} $ml={9} $mt={17}><Chevron /></Slot>
        <Slot $w={18} $ml={13} $mt={12}>
          <svg width="18" height="17" viewBox="0 0 18 17" fill="none" stroke="#b4b4b4">
            <path d="M16 5.500H7C3.500 5.500 1.500 7.500 1.500 10.300c0 3 2.500 5 5.500 5" strokeWidth="2.600" />
            <path d="M11.500 1 16 5.500 11.500 10" strokeWidth="2.400" />
          </svg>
        </Slot>
        <Slot $w={8} $ml={9} $mt={17}><Chevron c="#b4b4b4" /></Slot>
        <Slot $w={8} $ml={18} $mt={19}>
          <svg width="6" height="7" viewBox="0 0 6 7"><path d="M.5 0h5v1h-5zM0 3h6L3 6.200z" fill="#555" /></svg>
        </Slot>
        <TitleText>{"posterior chest vibrator project plan  -  Excel (Product Activation Failed)"}</TitleText>
        <SignIn>Sign in</SignIn>
        <Slot $w={17} $ml={29} $mt={12}>
          <svg width="17" height="14" viewBox="0 0 17 14" fill="none" stroke="#333">
            <path d="M.5.500h16v13H.5zM.5 2.500h16" />
            <path d="M8.500 12V5M5.500 7.800l3-3 3 3" strokeWidth="1.300" />
          </svg>
        </Slot>
        <Slot $w={12} $ml={43} $mt={18}>
          <svg width="12" height="1" viewBox="0 0 12 1"><path d="M0 0h12v1H0z" fill="#222" /></svg>
        </Slot>
        <Slot $w={13} $ml={44} $mt={12}>
          <svg width="13" height="14" viewBox="0 0 13 14" fill="none" stroke="#222" strokeWidth="1.200">
            <rect x=".6" y="3.600" width="9.500" height="9.500" rx="2" />
            <path d="M3 1.500C3.500.9 4 .6 5 .6h4c2 0 3.400 1.400 3.400 3.400v4c0 1-.3 1.700-1 2.200" />
          </svg>
        </Slot>
        <Slot $w={13} $ml={44} $mt={13}>
          <svg width="13" height="13" viewBox="0 0 13 13" stroke="#222" strokeWidth="1.200"><path d="M.5.500l12 12M12.500.500l-12 12" /></svg>
        </Slot>
      </TitleBar>

      <TabStrip>
        <FileTab>File</FileTab>
        <ActiveTab>Home</ActiveTab>
        <Tab $w={49} $ml={13}>Insert</Tab>
        <Tab $w={92} $ml={15} $ls={-0.28}>Page Layout</Tab>
        <Tab $w={77} $ml={14}>Formulas</Tab>
        <Tab $w={46} $ml={11}>Data</Tab>
        <Tab $w={58} $ml={13} $ls={-0.25}>Review</Tab>
        <Tab $w={45} $ml={16} $ls={0}>View</Tab>
        <Tab $w={45} $ml={14} $ls={0}>Help</Tab>
        <Slot $w={15} $ml={19}>
          <svg width="14" height="20" viewBox="0 0 14 20" fill="none" stroke="#333" strokeWidth="1.300">
            <path d="M4.200 13.500c0-3-3.500-4-3.500-7.300A6.200 6.200 0 0 1 7 .7a6.200 6.200 0 0 1 6.300 5.500c0 3.300-3.500 4.300-3.500 7.300zM4.200 15.800h5.600M5 18.500h4" />
          </svg>
        </Slot>
        <Tab $w={200} $ml={17} $c="#444" $ls={-0.05}>Tell me what you want to do</Tab>
        <Slot $w={18} $ml={981}>
          <svg width="18" height="17" viewBox="0 0 18 17" fill="none" stroke="#217346" strokeWidth="1.200">
            <path d="M.6.600h16.800v11.800H7l-3.400 3.400v-3.400h-3z" />
          </svg>
        </Slot>
      </TabStrip>

      <Ribbon>
        <ClipboardGroup />
        <FontGroup />
        <AlignmentGroup />
        <NumberGroup />
        <StylesGroup />
        <CellsGroup />
        <EditingGroup />
        <CollapseSlot>
          <svg width="17" height="9" viewBox="0 0 17 9" fill="none" stroke="#444" strokeWidth="1.400"><path d="M.5 8.500l8-8 8 8" /></svg>
        </CollapseSlot>
      </Ribbon>

      <FormulaBar>
        <Field $w={127}><Text $fs={15}>H15</Text><Caret /></Field>
        <Dots $ml={17} $h={30}><Dot /></Dots>
        <Field $w={137} $ml={17} $p="0" $j="flex-start">
          <Slot $w={15} $ml={14}>
            <svg width="15" height="14" viewBox="0 0 15 14" stroke="#bdbdbd" strokeWidth="1.800"><path d="M.8.800l13.200 12.400M14 .8.8 13.200" /></svg>
          </Slot>
          <Slot $w={17} $ml={30}>
            <svg width="17" height="13" viewBox="0 0 17 13" fill="none" stroke="#bdbdbd" strokeWidth="2.600"><path d="M1 7.500l4.500 4L16 1" /></svg>
          </Slot>
          <Slot $w={20} $ml={25} $mt={-2}>
            <Glyph $fs={21} $b={700} $i $f={SERIF} $c="#6a6a6a">f</Glyph>
            <Glyph $fs={16} $b={700} $i $f={SERIF} $c="#6a6a6a">x</Glyph>
          </Slot>
        </Field>
        <Field $w={1604} $ml={3} $j="flex-end" $p="0 5px 0 0">
          <svg width="9" height="6" viewBox="0 0 9 6" fill="none" stroke="#666" strokeWidth="2"><path d="M.7 1l3.800 3.600L8.300 1" /></svg>
        </Field>
      </FormulaBar>

      <SheetArea>
        <Worksheet />
        <ScrollColumn>
          <ScrollPart><svg width="9" height="5" viewBox="0 0 9 5"><path d="M0 5h9L4.500.300z" fill="#222" /></svg></ScrollPart>
          <ScrollPart $h={21} />
          <ScrollPart $h={20} $mt="auto"><svg width="9" height="5" viewBox="0 0 9 5"><path d="M0 0h9L4.500 4.700z" fill="#222" /></svg></ScrollPart>
        </ScrollColumn>
      </SheetArea>

      <TabBar>
        <Slot $w={5} $ml={28}>
          <svg width="5" height="9" viewBox="0 0 5 9"><path d="M5 0v9L0 4.500z" fill="#bdbdbd" /></svg>
        </Slot>
        <Slot $w={5} $ml={24}>
          <svg width="5" height="9" viewBox="0 0 5 9"><path d="M0 0v9l5-4.500z" fill="#bdbdbd" /></svg>
        </Slot>
        <Slot $w={3} />
        <SheetTab>Gantt_Chart_1</SheetTab>
        <Slot $w={20} $ml={33}>
          <svg width="20" height="20" viewBox="0 0 20 20" fill="none" stroke="#6a6a6a">
            <circle cx="10" cy="10" r="9.400" strokeWidth="1.200" />
            <path d="M10 5v10M5 10h10" strokeWidth="2" />
          </svg>
        </Slot>
        <Splitter><Dots $ml={13} $h={28}><Dot /></Dots></Splitter>
        <HScroll>
          <ScrollPart><svg width="5" height="9" viewBox="0 0 5 9"><path d="M5 0v9L0 4.500z" fill="#222" /></svg></ScrollPart>
          <ScrollPart $w={451} $ml="101px" />
          <ScrollPart $ml="auto"><svg width="5" height="9" viewBox="0 0 5 9"><path d="M0 0v9l5-4.500z" fill="#222" /></svg></ScrollPart>
        </HScroll>
      </TabBar>

      <StatusBar>
        <StatusText $ml={10} $w={60}>Ready</StatusText>
        <Slot $w={19}>
          <svg width="19" height="18" viewBox="0 0 19 18" fill="none" stroke="#fff">
            <path d="M5 1.500A7.500 7.500 0 0 0 8 15.700" strokeWidth="1.400" strokeDasharray="3 1.500" />
            <path d="M8 1v5M5 6h10M8 6v4l-2 4M12.500 3.500 15.500 6l-3 2.500" strokeWidth="1.300" />
            <path d="M10 9.500l8 8M18 9.500l-8 8" strokeWidth="2" />
          </svg>
        </Slot>
        <StatusText $ml={3} $w={1456} $ls={0.05}>Accessibility: Investigate</StatusText>
        <ViewBtn $on>
          <svg width="16" height="16" viewBox="0 0 16 16" fill="none" stroke="#fff"><path d="M.5.500h15v15H.5zM.5 5.500h15M.5 10.500h15M5.500.500v15M10.500.500v15" /></svg>
        </ViewBtn>
        <ViewBtn>
          <svg width="17" height="15" viewBox="0 0 17 15" fill="none" stroke="#fff"><path d="M.5.500h16v14H.5zM4.500 2.500h8v10h-8zM6 5.500h5M6 7.500h5M6 9.500h5" /></svg>
        </ViewBtn>
        <ViewBtn>
          <svg width="17" height="16" viewBox="0 0 17 16" fill="none"><path d="M.5.500h16v15H.5z" stroke="#fff" /><path d="M0 0h5v10H0zM6 0h5v10H6z" fill="#fff" /></svg>
        </ViewBtn>
        <Slot $w={158} $ml={6} $mt={-1}>
          <svg width="158" height="14" viewBox="0 0 158 14">
            <path d="M1 6h10v1H1zM17 7h125v1H17zM79 4h1v7h-1zM82 0h6v14h-6zM148 6h10v1h-10zM152.500 2h1v9h-1z" fill="#fff" />
          </svg>
        </Slot>
        <StatusText $ml={16} $w={34}>123%</StatusText>
      </StatusBar>

      <Taskbar>
        <Slot $w={29} $ml={26}>
          <svg width="29" height="29" viewBox="0 0 29 29">
            <defs>
              <linearGradient id="win" x1="0" y1="0" x2="1" y2="1"><stop stopColor="#7df0fb" /><stop offset="1" stopColor="#0f97fb" /></linearGradient>
            </defs>
            <path d="M0 1.500C0 .7.700 0 1.500 0H14v14H0zM15 0h12.500c.8 0 1.500.7 1.500 1.500V14H15zM0 15h14v14H1.500C.7 29 0 28.300 0 27.500zM15 15h14v12.500c0 .8-.7 1.500-1.500 1.500H15z" fill="url(#win)" />
          </svg>
        </Slot>
        <SearchPill>
          <svg width="18" height="18" viewBox="0 0 18 18" fill="none" stroke="#e6e6e6" strokeWidth="2">
            <circle cx="7.500" cy="7.500" r="6.500" />
            <path d="M12.200 12.200l5 5" strokeLinecap="round" />
          </svg>
          <Text $ml={12} $w={196} $fs={16.500} $ls={-0.1}>Search</Text>
          <svg width="26" height="26" viewBox="0 0 26 26">
            <defs>
              <linearGradient id="bg1" x1="1" y1="0" x2="0" y2="1"><stop stopColor="#3bd5f5" /><stop offset="1" stopColor="#1c5fe0" /></linearGradient>
            </defs>
            <path d="M13 0a12.500 12.500 0 1 1 0 25H0V13A12.500 12.500 0 0 1 13 0z" fill="url(#bg1)" />
            <circle cx="13.200" cy="12.700" r="10.300" fill="#fff" />
            <path d="M9 5.500l2.800 1.200v9.300L9 18.500z" fill="#2a9df0" />
            <path d="M9 18.500l7-4-2-1-1.200-3 6 2.200c2 1.200 1.500 3.500.2 4.300L12.500 20c-1.500.8-3.500.2-3.500-1.500z" fill="#1c6fe8" />
          </svg>
        </SearchPill>
        <Slot $w={2} />
        <TaskIcons />
        <Slot $w={14} $ml={878}>
          <svg width="14" height="8" viewBox="0 0 14 8" fill="none" stroke="#fff" strokeWidth="1.900"><path d="M.8 7.200 7 1l6.200 6.200" /></svg>
        </Slot>
        <Slot $w={20} $ml={23}>
          <svg width="20" height="16" viewBox="0 0 20 16" fill="none" stroke="#fff" strokeWidth="1.600">
            <path d="M.8 5.500a13 13 0 0 1 18.400 0M3.500 8.500a9.200 9.200 0 0 1 13 0M6.200 11.300a5.400 5.400 0 0 1 7.600 0" />
            <circle cx="10" cy="13.700" r="1.700" fill="#fff" stroke="none" />
          </svg>
        </Slot>
        <Slot $w={20} $ml={10}>
          <svg width="20" height="16" viewBox="0 0 20 16" fill="none" stroke="#fff" strokeWidth="1.500">
            <path d="M.8 5.300h3L8 1.500v13L3.800 10.700h-3z" />
            <path d="M10.700 5.500a3.600 3.600 0 0 1 0 5M13 3a7 7 0 0 1 0 10" />
            <path d="M15.500 .8a10 10 0 0 1 0 14.400" stroke="#6b6c6e" />
          </svg>
        </Slot>
        <Slot $w={20} $ml={10}>
          <svg width="20" height="13" viewBox="0 0 20 13">
            <rect x=".8" y=".8" width="16.400" height="11.400" rx="2.800" fill="none" stroke="#fff" strokeWidth="1.600" />
            <path d="M3 3h7v7H3zM18 4h1c.6 0 1 .4 1 1v3c0 .6-.4 1-1 1h-1z" fill="#fff" />
          </svg>
        </Slot>
        <Clock>2:32 PM<br />6/9/2023</Clock>
        <CountBadge>21</CountBadge>
      </Taskbar>
    </Window>
  );
}
